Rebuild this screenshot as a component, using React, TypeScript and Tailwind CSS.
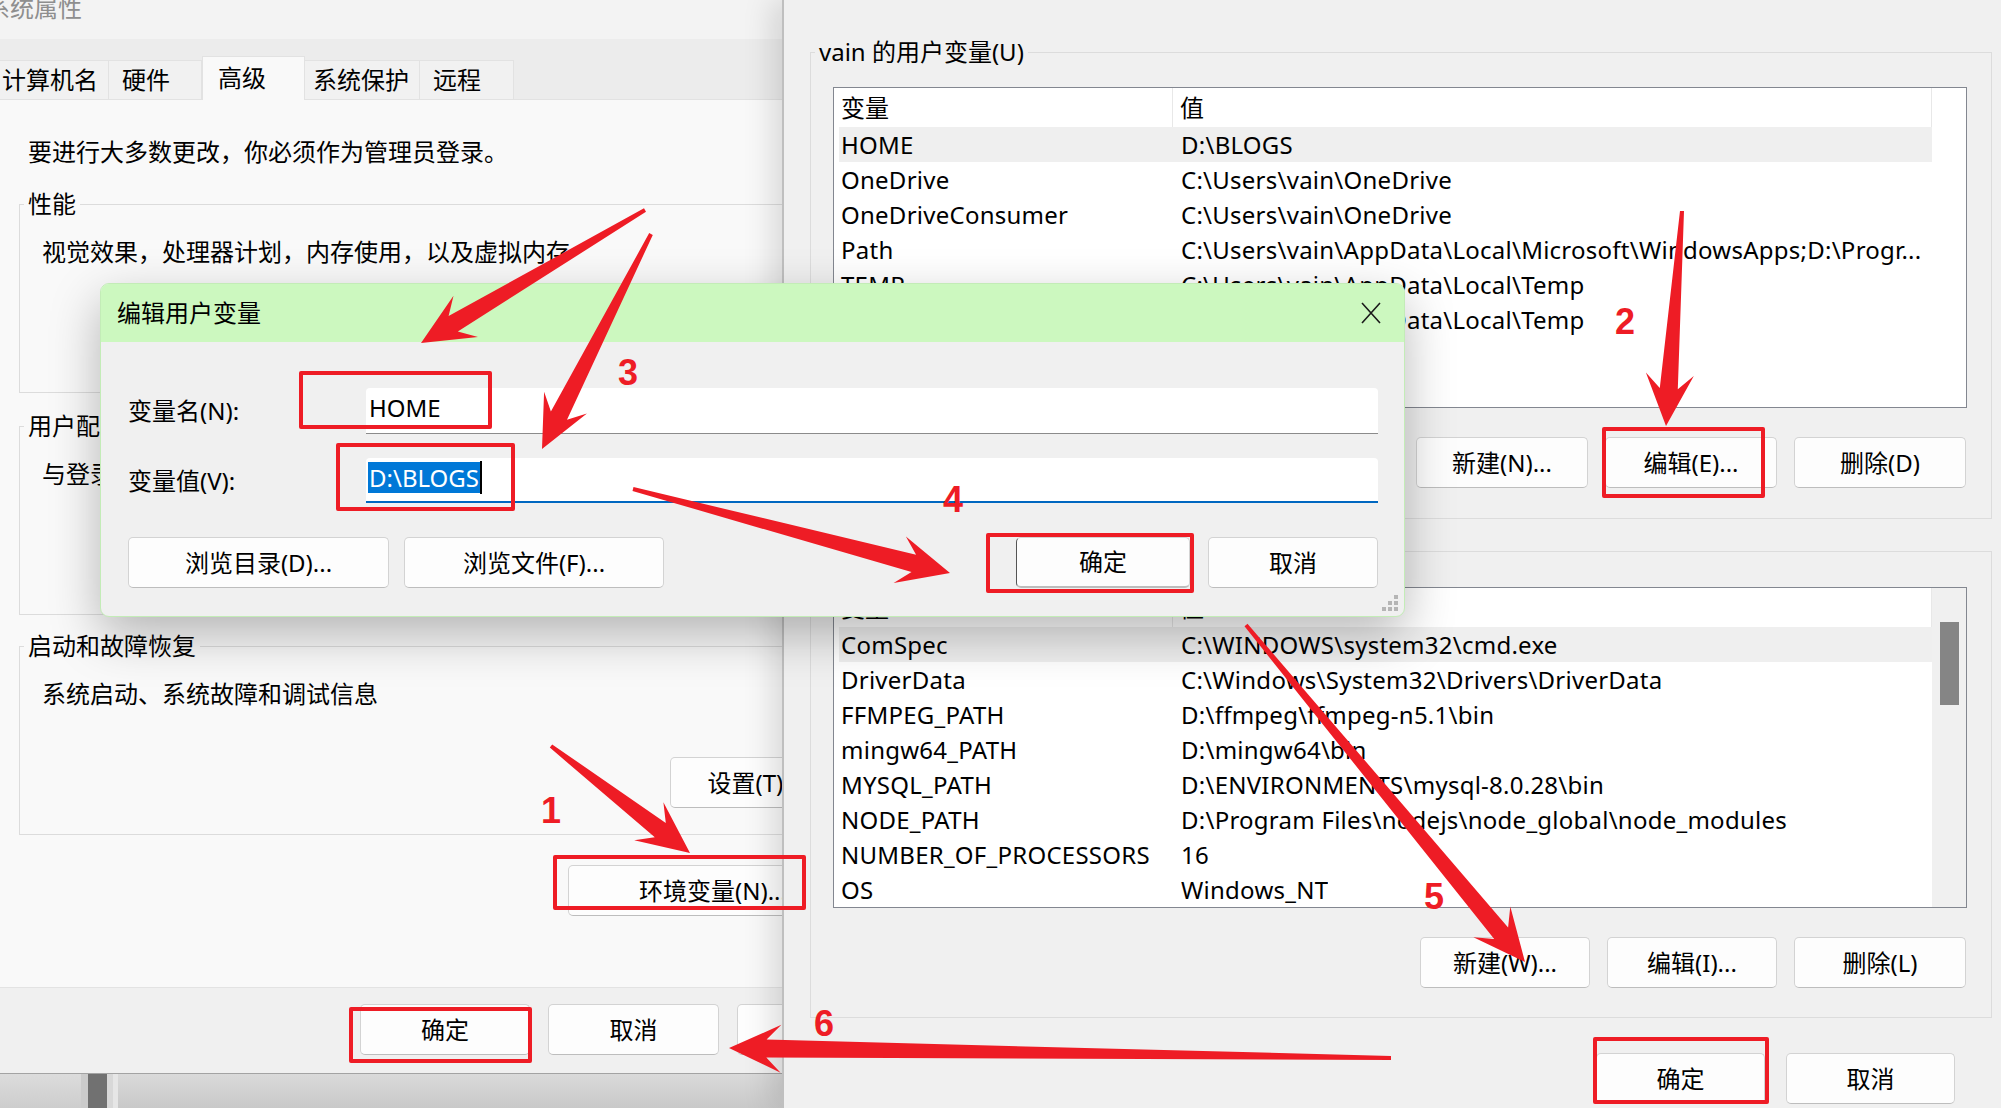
import React from "react";

const FONT = "font-['Noto_Sans','Noto_Sans_CJK_SC',sans-serif]";

function Btn({ w, className = "", children }: { w: string; className?: string; children: React.ReactNode }) {
  return (
    <div
      className={`${w} ${className} h-[51px] shrink-0 flex items-center justify-center rounded-[5px] border border-[#d3d3d3] border-b-[#bdbdbd] bg-[#fdfdfd] text-[24px] leading-[32px] text-black whitespace-nowrap`}
    >
      {children}
    </div>
  );
}

function Group({
  mt,
  title,
  text,
  btn,
}: {
  mt: string;
  title: string;
  text: string;
  btn: string;
}) {
  return (
    <div className={`${mt} w-[888px] h-[189px] shrink-0 border border-[#dcdcdc] flex flex-col items-start`}>
      <div className="-mt-[17px] ml-[4px] px-[4px] bg-[#f9f9f9] leading-[32px]">{title}</div>
      <div className="mt-[16px] pl-[22px] leading-[32px] whitespace-nowrap">{text}</div>
      <Btn w="w-[170px]" className="mt-[47px] ml-[650px]">
        {btn}
      </Btn>
    </div>
  );
}

function LeftColumn() {
  const tabs = [
    { t: "计算机名", w: "w-[109px]", pl: "pl-[2px]", sel: false },
    { t: "硬件", w: "w-[93px]", pl: "pl-[13px]", sel: false },
    { t: "高级", w: "w-[103px]", pl: "pl-[15px]", sel: true },
    { t: "系统保护", w: "w-[115px]", pl: "pl-[8px]", sel: false },
    { t: "远程", w: "w-[94px]", pl: "pl-[13px]", sel: false },
  ];
  return (
    <div className="w-[782px] shrink-0 h-full flex flex-col">
      <div className="h-[1074px] shrink-0 overflow-hidden border-b border-[#a3a3a3]">
        <div className="w-[925px] h-full flex flex-col">
          {/* title bar */}
          <div className="h-[39px] shrink-0 bg-[#f3f3f3] overflow-hidden">
            <div className="-ml-[14px] -mt-[8px] leading-[32px] text-[#8e8e8e]">系统属性</div>
          </div>
          {/* tab strip */}
          <div className="h-[61px] shrink-0 bg-[#ececec] flex items-end">
            {tabs.map((tb) =>
              tb.sel ? (
                <div
                  key={tb.t}
                  className={`${tb.w} ${tb.pl} h-[44px] bg-[#f9f9f9] border-t border-l border-r border-[#e2e2e2] flex items-start pt-[5px] leading-[32px]`}
                >
                  {tb.t}
                </div>
              ) : (
                <div
                  key={tb.t}
                  className={`${tb.w} ${tb.pl} h-[40px] bg-[#f1f1f1] border-t border-r border-b border-[#e2e2e2] flex items-center leading-[32px]`}
                >
                  {tb.t}
                </div>
              )
            )}
            <div className="flex-1 h-[1px] bg-[#e2e2e2]" />
          </div>
          {/* content */}
          <div className="flex-1 bg-[#f9f9f9] flex flex-col pl-[19px]">
            <div className="pt-[36px] pl-[9px] leading-[32px] whitespace-nowrap">
              要进行大多数更改，你必须作为管理员登录。
            </div>
            <Group mt="mt-[36px]" title="性能" text="视觉效果，处理器计划，内存使用，以及虚拟内存" btn="设置(S)..." />
            <Group mt="mt-[33px]" title="用户配置文件" text="与登录帐户相关的桌面设置" btn="设置(E)..." />
            <Group mt="mt-[31px]" title="启动和故障恢复" text="系统启动、系统故障和调试信息" btn="设置(T)..." />
            <Btn w="w-[290px]" className="mt-[30px] ml-[549px]">
              环境变量(N)...
            </Btn>
          </div>
          {/* bottom bar */}
          <div className="h-[86px] shrink-0 bg-[#f0f0f0] border-t border-[#e3e3e3] flex items-start pt-[16px] pl-[360px] gap-[18px]">
            <Btn w="w-[170px]">确定</Btn>
            <Btn w="w-[171px]">取消</Btn>
            <Btn w="w-[170px]" className="text-[#9a9a9a]">应用(A)</Btn>
          </div>
        </div>
      </div>
      {/* desktop strip */}
      <div className="flex-1 flex">
        <div className="w-[81px] bg-gradient-to-b from-[#dcdcdc] to-[#cdcdcd]" />
        <div className="w-[7px] bg-[#cbcbcb]" />
        <div className="w-[19px] bg-[#717171]" />
        <div className="w-[6px] bg-[#d8d8d8]" />
        <div className="w-[5px] bg-[#e6e6e6]" />
        <div className="flex-1 bg-gradient-to-b from-[#dadada] to-[#c9c9c9]" />
      </div>
    </div>
  );
}

type Row = [string, string, boolean?];

function VarList({ rows, scroll }: { rows: Row[]; scroll: boolean }) {
  return (
    <div className="ml-[22px] mr-[24px] h-[321px] shrink-0 border border-[#838790] bg-white flex overflow-hidden">
      <div className="flex-1 flex flex-col pl-[5px] min-w-0">
        <div className="h-[39px] shrink-0 flex items-stretch border-r border-[#e8e8e8] bg-white">
          <div className="w-[334px] pl-[2px] border-r border-[#e8e8e8] flex items-center leading-[32px]">变量</div>
          <div className="pl-[7px] flex items-center leading-[32px]">值</div>
        </div>
        {rows.map(([k, v, sel]) => (
          <div
            key={k}
            className={`h-[35px] shrink-0 flex items-center whitespace-nowrap leading-[32px] tracking-[0.25px] ${sel ? "bg-[#efefef]" : ""}`}
          >
            <div className="w-[342px] shrink-0 pl-[2px] overflow-hidden">{k}</div>
            <div className="overflow-hidden">{v}</div>
          </div>
        ))}
      </div>
      <div className={`w-[34px] shrink-0 flex justify-center pt-[34px] ${scroll ? "bg-[#f0f0f0]" : "bg-white"}`}>
        {scroll && <div className="w-[19px] h-[83px] bg-[#858585]" />}
      </div>
    </div>
  );
}

function RightWindow() {
  const userRows: Row[] = [
    ["HOME", "D:\\BLOGS", true],
    ["OneDrive", "C:\\Users\\vain\\OneDrive"],
    ["OneDriveConsumer", "C:\\Users\\vain\\OneDrive"],
    ["Path", "C:\\Users\\vain\\AppData\\Local\\Microsoft\\WindowsApps;D:\\Progr..."],
    ["TEMP", "C:\\Users\\vain\\AppData\\Local\\Temp"],
    ["TMP", "C:\\Users\\vain\\AppData\\Local\\Temp"],
  ];
  const sysRows: Row[] = [
    ["ComSpec", "C:\\WINDOWS\\system32\\cmd.exe", true],
    ["DriverData", "C:\\Windows\\System32\\Drivers\\DriverData"],
    ["FFMPEG_PATH", "D:\\ffmpeg\\ffmpeg-n5.1\\bin"],
    ["mingw64_PATH", "D:\\mingw64\\bin"],
    ["MYSQL_PATH", "D:\\ENVIRONMENTS\\mysql-8.0.28\\bin"],
    ["NODE_PATH", "D:\\Program Files\\nodejs\\node_global\\node_modules"],
    ["NUMBER_OF_PROCESSORS", "16"],
    ["OS", "Windows_NT"],
  ];
  return (
    <div className="relative z-10 flex-1 h-full bg-[#f0f0f0] border-l-2 border-[#bfbfbf] shadow-[-10px_0_28px_rgba(0,0,0,0.13)] flex flex-col pl-[26px] pr-[9px] pt-[52px]">
      <div className="h-[467px] shrink-0 border border-[#dcdcdc] flex flex-col">
        <div className="self-start -mt-[17px] ml-[4px] px-[4px] bg-[#f0f0f0] leading-[32px]">vain 的用户变量(U)</div>
        <div className="mt-[19px] flex flex-col">
          <VarList rows={userRows} scroll={false} />
        </div>
        <div className="mt-[29px] flex justify-end gap-[17px] mr-[25px]">
          <Btn w="w-[172px]">新建(N)...</Btn>
          <Btn w="w-[172px]">编辑(E)...</Btn>
          <Btn w="w-[172px]">删除(D)</Btn>
        </div>
      </div>
      <div className="mt-[32px] h-[467px] shrink-0 border border-[#dcdcdc] flex flex-col">
        <div className="self-start -mt-[17px] ml-[4px] px-[4px] bg-[#f0f0f0] leading-[32px]">系统变量(S)</div>
        <div className="mt-[20px] flex flex-col">
          <VarList rows={sysRows} scroll={true} />
        </div>
        <div className="mt-[29px] flex justify-end gap-[17px] mr-[25px]">
          <Btn w="w-[170px]">新建(W)...</Btn>
          <Btn w="w-[170px]">编辑(I)...</Btn>
          <Btn w="w-[172px]">删除(L)</Btn>
        </div>
      </div>
      <div className="mt-[35px] flex justify-end gap-[21px] mr-[37px]">
        <Btn w="w-[169px]">确定</Btn>
        <Btn w="w-[169px]">取消</Btn>
      </div>
    </div>
  );
}

function EditDialog() {
  return (
    <div className="absolute z-20 left-[100px] top-[283px] w-[1305px] h-[334px] rounded-[9px] border border-[#c3ecb7] bg-[#f0f0f0] overflow-hidden shadow-[0_18px_50px_rgba(0,0,0,0.28)] flex flex-col">
      <div className="h-[58px] shrink-0 bg-[#ccf8bf] flex items-center justify-between pl-[16px] pr-[23px]">
        <span className="leading-[32px]">编辑用户变量</span>
        <svg width="20" height="22" viewBox="0 0 20 22">
          <path d="M1 1 L19 21 M19 1 L1 21" stroke="#1b1b1b" strokeWidth="1.6" fill="none" />
        </svg>
      </div>
      <div className="relative flex-1 flex flex-col pl-[27px] pr-[26px] pt-[46px]">
        <div className="h-[46px] flex items-center">
          <div className="w-[238px] shrink-0 leading-[32px]">变量名(N):</div>
          <div className="flex-1 h-full bg-white border-b border-[#8b8b8b] rounded-t-[4px] pl-[3px] pb-[6px] flex items-center leading-[32px]">
            HOME
          </div>
        </div>
        <div className="mt-[24px] h-[45px] flex items-center">
          <div className="w-[238px] shrink-0 leading-[32px]">变量值(V):</div>
          <div className="flex-1 h-full bg-white border-b-2 border-[#0067c0] rounded-t-[4px] pl-[2px] pb-[4px] flex items-center">
            <span className="bg-[#0078d7] text-white leading-[31px] px-[1px]">D:\BLOGS</span>
            <span className="w-[2px] h-[33px] bg-black" />
          </div>
        </div>
        <div className="mt-[34px] flex items-start">
          <Btn w="w-[261px]">浏览目录(D)...</Btn>
          <Btn w="w-[260px]" className="ml-[15px]">浏览文件(F)...</Btn>
          <div className="flex-1" />
          <Btn w="w-[174px]" className="border-l-[#555555] border-b-2 border-b-[#0067c0]">确定</Btn>
          <Btn w="w-[170px]" className="ml-[18px]">取消</Btn>
        </div>
        <svg className="absolute right-[5px] bottom-[4px]" width="18" height="18" viewBox="0 0 18 18">
          <rect x="13" y="1" width="4" height="4" fill="#b5b5b5" />
          <rect x="7" y="7" width="4" height="4" fill="#b5b5b5" />
          <rect x="13" y="7" width="4" height="4" fill="#b5b5b5" />
          <rect x="1" y="13" width="4" height="4" fill="#b5b5b5" />
          <rect x="7" y="13" width="4" height="4" fill="#b5b5b5" />
          <rect x="13" y="13" width="4" height="4" fill="#b5b5b5" />
        </svg>
      </div>
    </div>
  );
}

function arrowPts(x1: number, y1: number, x2: number, y2: number, len = 52, head = 24, shaft = 9, tail = 2) {
  const dx = x2 - x1;
  const dy = y2 - y1;
  const L = Math.hypot(dx, dy);
  const ux = dx / L;
  const uy = dy / L;
  const nx = -uy;
  const ny = ux;
  const bx = x2 - ux * len * 0.72;
  const by = y2 - uy * len * 0.72;
  const wx = x2 - ux * len;
  const wy = y2 - uy * len;
  const p = [
    [x1 + nx * tail, y1 + ny * tail],
    [bx + nx * shaft, by + ny * shaft],
    [wx + nx * head, wy + ny * head],
    [x2, y2],
    [wx - nx * head, wy - ny * head],
    [bx - nx * shaft, by - ny * shaft],
    [x1 - nx * tail, y1 - ny * tail],
  ];
  return p.map(([a, b]) => `${a.toFixed(1)},${b.toFixed(1)}`).join(" ");
}

function Annotations() {
  const RED = "#ee1c25";
  const arrows: [number, number, number, number][] = [
    [645, 210, 421, 343],
    [651, 234, 542, 449],
    [551, 746, 690, 853],
    [1682, 211, 1666, 426],
    [633, 489, 950, 573],
    [1246, 625, 1525, 962],
    [1391, 1058, 729, 1048],
  ];
  const rects = [
    "left-[299px] top-[371px] w-[193px] h-[58px]",
    "left-[336px] top-[443px] w-[179px] h-[68px]",
    "left-[986px] top-[533px] w-[208px] h-[60px]",
    "left-[1602px] top-[427px] w-[163px] h-[71px]",
    "left-[553px] top-[855px] w-[253px] h-[55px]",
    "left-[349px] top-[1007px] w-[183px] h-[56px]",
    "left-[1593px] top-[1037px] w-[176px] h-[67px]",
  ];
  const nums: [string, string][] = [
    ["1", "left-[551px] top-[811px]"],
    ["2", "left-[1625px] top-[322px]"],
    ["3", "left-[628px] top-[373px]"],
    ["4", "left-[953px] top-[500px]"],
    ["5", "left-[1434px] top-[897px]"],
    ["6", "left-[824px] top-[1024px]"],
  ];
  return (
    <>
      {rects.map((r) => (
        <div key={r} className={`absolute z-30 ${r} border-[4px] border-[#ee1c25] rounded-[2px]`} />
      ))}
      <svg className="absolute z-30 left-0 top-0" width="2001" height="1108" viewBox="0 0 2001 1108">
        {arrows.map((a, i) => (
          <polygon key={i} points={arrowPts(a[0], a[1], a[2], a[3])} fill={RED} />
        ))}
      </svg>
      {nums.map(([n, pos]) => (
        <div
          key={n}
          className={`absolute z-30 ${pos} -translate-x-1/2 -translate-y-1/2 font-['Liberation_Sans',Arial,sans-serif] font-bold text-[36px] leading-[36px] text-[#ee1c25]`}
        >
          {n}
        </div>
      ))}
    </>
  );
}

export default function App() {
  return (
    <div className={`relative w-[2001px] h-[1108px] overflow-hidden flex bg-[#d4d4d4] text-black text-[24px] ${FONT}`}>
      <LeftColumn />
      <RightWindow />
      <EditDialog />
      <Annotations />
    </div>
  );
}
